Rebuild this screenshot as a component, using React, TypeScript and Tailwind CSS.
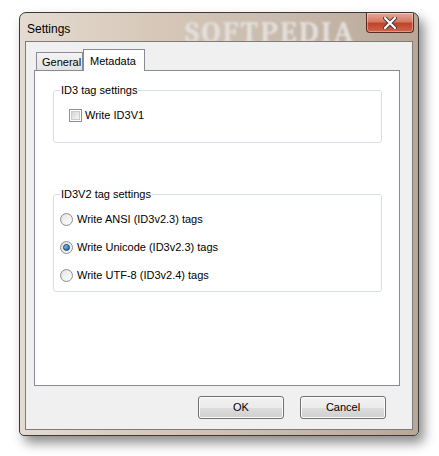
import React from 'react';

const font = { fontFamily: '"Liberation Sans", Arial, sans-serif' };

function Checkbox() {
  return (
    <span className="flex h-[13px] w-[13px] items-center justify-center border border-[#8e8f8f] bg-white">
      <span className="h-[9px] w-[9px] border border-[#c9cacb] bg-gradient-to-br from-[#d4d5d6] to-[#f6f6f6]" />
    </span>
  );
}

function Radio({ checked }: { checked?: boolean }) {
  return (
    <span className="flex h-[13px] w-[13px] items-center justify-center rounded-full border border-[#8e8f8f] bg-gradient-to-br from-[#dcdcdc] to-[#fafafa]">
      {checked ? (
        <span className="h-[7px] w-[7px] rounded-full border border-[#1a3b68] bg-gradient-to-br from-[#8fd0f5] to-[#0d5ea6]" />
      ) : (
        <span className="h-[9px] w-[9px] rounded-full bg-gradient-to-br from-[#e6e6e6] to-[#fdfdfd]" />
      )}
    </span>
  );
}

function Button({ label }: { label: string }) {
  return (
    <button className="flex h-[23px] w-[86px] items-center justify-center rounded-[3px] border border-[#707070] bg-[linear-gradient(#f2f2f2_0%,#ebebeb_50%,#dddddd_51%,#cfcfcf_100%)] text-[11px] text-black shadow-[inset_0_0_0_1px_#fcfcfc]">
      {label}
    </button>
  );
}

export default function App() {
  const radios = [
    { label: 'Write ANSI (ID3v2.3) tags', checked: false },
    { label: 'Write Unicode (ID3v2.3) tags', checked: true },
    { label: 'Write UTF-8 (ID3v2.4) tags', checked: false },
  ];

  return (
    <div className="h-[456px] w-[439px] bg-white pl-[19px] pt-[12px]" style={font}>
      {/* Window frame */}
      <div className="relative h-[424px] w-[400px] overflow-hidden rounded-t-[7px] rounded-b-[5px] border border-[#3a3a3a] bg-[linear-gradient(90deg,#e4dbd1_0%,#d6c7b8_35%,#c9bbad_65%,#b8a797_100%)] shadow-[5px_7px_12px_rgba(0,0,0,0.45)]">
        {/* watermark in title bar */}
        <div className="pointer-events-none absolute left-[165px] top-[-3px] font-serif text-[30px] font-bold tracking-[2px] text-[#e2dfdc] blur-[1px]">
          SOFTPEDIA
        </div>

        {/* Title bar */}
        <div className="relative flex h-[28px] items-start justify-between">
          <span className="pl-[7px] pt-[7px] text-[12px] text-black">Settings</span>
          <div className="mr-[4px] flex h-[20px] w-[48px] items-center justify-center rounded-b-[4px] border border-t-0 border-[#5b2a20] bg-[linear-gradient(#e9a998_0%,#d47a64_45%,#c2432b_55%,#d0654c_100%)] shadow-[inset_0_0_0_1px_rgba(255,255,255,0.35)]">
            <svg width="14" height="12" viewBox="0 0 14 12">
              <path d="M2 1 L12 11 M12 1 L2 11" stroke="#3a3a3a" strokeWidth="4" strokeLinecap="round" />
              <path d="M2 1 L12 11 M12 1 L2 11" stroke="#ffffff" strokeWidth="2.2" strokeLinecap="round" />
            </svg>
          </div>
        </div>

        {/* Client area */}
        <div className="relative ml-[5px] h-[389px] w-[388px] border border-[#7b7b7b] bg-[#f0f0f0] pt-[8px]">
          <div className="ml-[8px] w-[366px]">
            {/* Tabs */}
            <div className="flex h-[20px] items-end pl-[2px]">
              <div className="flex h-[18px] w-[47px] items-center border border-b-0 border-[#898c95] bg-[linear-gradient(#f4f4f4,#e2e2e2)] pl-[5px] pt-[1px] text-[11px] text-black">
                General
              </div>
              <div className="relative z-10 -mb-[1px] flex h-[22px] w-[62px] items-start border border-b-0 border-[#898c95] bg-white pl-[6px] pt-[3px] text-[11px] text-black">
                Metadata
              </div>
            </div>

            {/* Tab panel */}
            <div className="h-[316px] border border-[#898c95] bg-white pt-[12px] text-[11px] text-black">
              <fieldset className="ml-[18px] h-[60px] w-[329px] rounded-[3px] border border-[#d5dfe5]">
                <legend className="ml-[6px] px-[1px] leading-[14px]">ID3 tag settings</legend>
                <div className="mt-[10px] flex items-center gap-[3px] pl-[15px]">
                  <Checkbox />
                  <span>Write ID3V1</span>
                </div>
              </fieldset>

              <fieldset className="ml-[18px] mt-[44px] h-[105px] w-[329px] rounded-[3px] border border-[#d5dfe5]">
                <legend className="ml-[6px] px-[1px] leading-[14px]">ID3V2 tag settings</legend>
                <div className="mt-[10px] flex flex-col gap-[12px] pl-[6px]">
                  {radios.map((r) => (
                    <div key={r.label} className="flex h-[16px] items-center gap-[4px]">
                      <Radio checked={r.checked} />
                      <span>{r.label}</span>
                    </div>
                  ))}
                </div>
              </fieldset>
            </div>

            {/* Buttons */}
            <div className="mt-[10px] flex justify-end gap-[16px] pr-[14px]">
              <Button label="OK" />
              <Button label="Cancel" />
            </div>
          </div>
        </div>
      </div>
    </div>
  );
}
